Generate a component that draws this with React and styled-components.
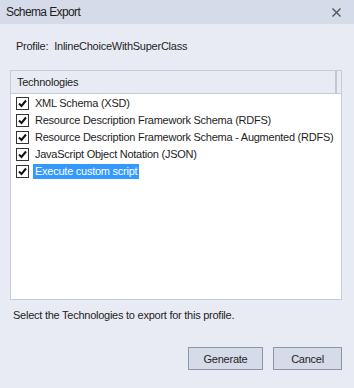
import React, { useState } from "react";
import styled, { createGlobalStyle } from "styled-components";

const GlobalStyle = createGlobalStyle`
  html, body {
    margin: 0;
    padding: 0;
    background: #e9ebf4;
  }
  body {
    font-family: "Liberation Sans", Arial, sans-serif;
    font-size: 11px;
    letter-spacing: -0.25px;
    color: #1e1e1e;
  }
`;

const technologies = [
  "XML Schema (XSD)",
  "Resource Description Framework Schema (RDFS)",
  "Resource Description Framework Schema - Augmented (RDFS)",
  "JavaScript Object Notation (JSON)",
  "Execute custom script",
];

const Dialog = styled.div`
  width: 354px;
  height: 388px;
  background: #e9ebf4;
  display: flex;
  flex-direction: column;
`;

const TitleBar = styled.div`
  height: 24px;
  background: #d6dbe9;
  display: flex;
  align-items: center;
  justify-content: space-between;
  padding: 0 13px 0 6px;
`;

const Title = styled.span`
  font-size: 12px;
  letter-spacing: -0.6px;
  color: #1e1e1e;
`;

const CloseIcon = styled.svg`
  width: 9px;
  height: 9px;
  display: block;
`;

const Body = styled.div`
  flex: 1;
  display: flex;
  flex-direction: column;
  padding: 15px 12px 18px 10px;
`;

const ProfileLine = styled.div`
  padding-left: 6px;
  height: 14px;
  line-height: 14px;
  display: flex;
  gap: 6px;
`;

const ListBox = styled.div`
  margin-top: 17px;
  height: 230px;
  box-sizing: border-box;
  border: 1px solid #c7cbd6;
  background: #ffffff;
  display: flex;
  flex-direction: column;
`;

const Header = styled.div`
  height: 23px;
  box-sizing: border-box;
  background: #e9ebf4;
  border-bottom: 1px solid #c7cbd6;
  display: flex;
  align-items: center;
`;

const HeaderCell = styled.div`
  flex: 1;
  padding-left: 6px;
  height: 100%;
  display: flex;
  align-items: center;
  border-right: 2px solid #c2c6ce;
`;

const HeaderTail = styled.div`
  width: 4px;
`;

const Rows = styled.div`
  display: flex;
  flex-direction: column;
  padding: 1px 0 0 5px;
`;

const Row = styled.div`
  height: 17px;
  display: flex;
  align-items: center;
`;

const Box = styled.span`
  flex-shrink: 0;
  width: 13px;
  height: 13px;
  box-sizing: border-box;
  border: 1px solid #333;
  background: #fff;
  display: flex;
  align-items: center;
  justify-content: center;
  margin-right: 4px;
`;

const Label = styled.span`
  padding: 1px 2px;
  line-height: 13px;
  background: ${(p) => (p.$selected ? "#3399ff" : "transparent")};
  color: ${(p) => (p.$selected ? "#ffffff" : "#1e1e1e")};
  white-space: nowrap;
`;

const Hint = styled.div`
  margin-top: 9px;
  padding-left: 3px;
`;

const Footer = styled.div`
  margin-top: auto;
  display: flex;
  justify-content: flex-end;
  gap: 10px;
`;

const Button = styled.button`
  width: ${(p) => p.$w}px;
  height: 23px;
  box-sizing: border-box;
  border: 1px solid #8d96a8;
  background: #d6dbe9;
  font-family: "Liberation Sans", Arial, sans-serif;
  font-size: 11px;
  letter-spacing: -0.25px;
  color: #1e1e1e;
  padding: 0;
`;

const Check = () => (
  <svg width="9" height="9" viewBox="0 0 9 9">
    <path d="M1 4.5 L3.5 7 L8 1.5" fill="none" stroke="#111" strokeWidth="2" />
  </svg>
);

export default function App() {
  const [checked] = useState(technologies.map(() => true));
  return (
    <Dialog>
      <GlobalStyle />
      <TitleBar>
        <Title>Schema Export</Title>
        <CloseIcon viewBox="0 0 9 9">
          <path d="M0.5 0.5 L8.5 8.5 M8.5 0.5 L0.5 8.5" stroke="#555" strokeWidth="1.4" />
        </CloseIcon>
      </TitleBar>
      <Body>
        <ProfileLine>
          <span>Profile:</span>
          <span>InlineChoiceWithSuperClass</span>
        </ProfileLine>
        <ListBox>
          <Header>
            <HeaderCell>Technologies</HeaderCell>
            <HeaderTail />
          </Header>
          <Rows>
            {technologies.map((t, i) => (
              <Row key={t}>
                <Box>{checked[i] && <Check />}</Box>
                <Label $selected={i === technologies.length - 1}>{t}</Label>
              </Row>
            ))}
          </Rows>
        </ListBox>
        <Hint>Select the Technologies to export for this profile.</Hint>
        <Footer>
          <Button $w={75}>Generate</Button>
          <Button $w={69}>Cancel</Button>
        </Footer>
      </Body>
    </Dialog>
  );
}
